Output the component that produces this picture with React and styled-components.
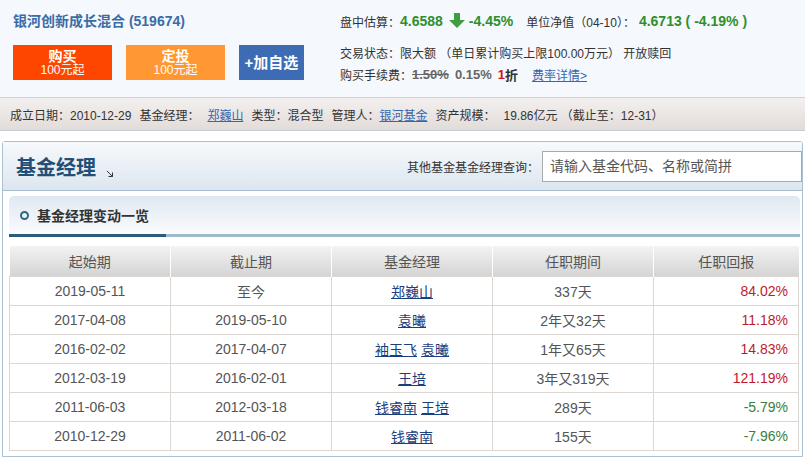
import React from 'react';
import styled, { createGlobalStyle } from 'styled-components';

const GlobalStyle = createGlobalStyle`
  html, body {
    margin: 0;
    padding: 0;
    background: #fff;
  }
  body {
    font-family: "Liberation Sans", "Noto Sans CJK SC", sans-serif;
    font-size: 12px;
    color: #333;
  }
`;

const Page = styled.div`
  width: 805px;
  height: 463px;
  overflow: hidden;
`;

const Top = styled.div`
  display: grid;
  grid-template-columns: 327px 1fr;
  height: 98px;
  box-sizing: border-box;
  padding: 11px 0 0 13px;
  background: #f5f8fc;
  border-bottom: 1px solid #c6d3df;
`;

const FundTitle = styled.div`
  height: 20px;
  line-height: 20px;
  font-size: 14px;
  font-weight: bold;
  color: #3b6ca6;
`;

const BtnRow = styled.div`
  display: flex;
  gap: 14px;
  margin-top: 14px;
`;

const Btn = styled.div`
  width: ${p => p.w || 99}px;
  height: 35px;
  background: ${p => p.bg};
  color: #fff;
  display: flex;
  flex-direction: column;
  align-items: center;
  justify-content: center;
  font-weight: bold;
  font-size: ${p => (p.big ? 15 : 14)}px;
  line-height: 15px;
  small {
    font-size: 12px;
    font-weight: normal;
    line-height: 13px;
  }
`;

const InfoLine = styled.div`
  display: flex;
  align-items: center;
  height: ${p => p.h || 22}px;
  margin-top: ${p => p.mt || 0}px;
  white-space: nowrap;
`;

const Green = styled.span`
  color: #2f8f2f;
  font-weight: bold;
  font-size: 14px;
`;

const Gray = styled.span`
  color: #666;
  font-weight: bold;
  font-size: 13px;
  margin-right: 6px;
  text-decoration: ${p => (p.strike ? 'line-through' : 'none')};
`;

const Red = styled.span`
  color: #d0141e;
  font-weight: bold;
  font-size: 13px;
`;

const TopLink = styled.a`
  color: #3566b0;
  text-decoration: underline;
  margin-left: ${p => p.ml || 0}px;
  margin-right: ${p => p.mr || 0}px;
`;

const InfoBar = styled.div`
  height: 32px;
  display: flex;
  align-items: center;
  padding-left: 10px;
  background: linear-gradient(#f3f0ef, #e2dcd9);
  border-bottom: 1px solid #c3ccd6;
  white-space: nowrap;
  span { margin-right: 8px; }
`;

const Panel = styled.div`
  margin: 10px 2px 0 2px;
  border: 1px solid #a9bfd2;
  border-radius: 3px 3px 0 0;
  height: 316px;
  box-sizing: border-box;
`;

const PanelHead = styled.div`
  height: 48px;
  display: flex;
  align-items: center;
  justify-content: space-between;
  background: linear-gradient(#f7f9fb, #dce6f0);
  border-bottom: 1px solid #a9bfd2;
`;

const HeadTitle = styled.div`
  display: flex;
  align-items: flex-end;
  padding-left: 13px;
  font-size: 20px;
  font-weight: bold;
  color: #214f78;
  svg { margin: 0 0 3px 10px; }
`;

const Search = styled.div`
  display: flex;
  align-items: center;
  gap: 3px;
`;

const SearchInput = styled.div`
  width: 251px;
  height: 29px;
  line-height: 29px;
  padding-left: 7px;
  border: 1px solid #aaa;
  background: #fff;
  font-size: 14px;
  color: #555;
`;

const Body = styled.div`
  padding: 5px 2px 0 6px;
`;

const SubTab = styled.div`
  height: 38px;
  display: flex;
  align-items: center;
  gap: 8px;
  padding-left: 11px;
  border-radius: 5px 5px 0 0;
  background: linear-gradient(#dfe8f1, #fafbfd);
  border-bottom: 3px solid #9fbacb;
  position: relative;
  font-size: 14px;
  font-weight: bold;
  color: #333;
  &::after {
    content: '';
    position: absolute;
    left: 0;
    bottom: -3px;
    width: 157px;
    height: 3px;
    background: #2b5d78;
  }
`;

const Ring = styled.span`
  width: 5px;
  height: 5px;
  border: 2px solid #2d6880;
  border-radius: 50%;
`;

const Table = styled.table`
  margin-top: 9px;
  width: 789px;
  table-layout: fixed;
  border-collapse: collapse;
  font-size: 14px;
  color: #555;
`;

const Col = styled.col`
  width: ${p => p.w}px;
`;

const Tr = styled.tr`
  height: ${p => p.h}px;
`;

const Th = styled.th`
  padding: 0;
  font-weight: normal;
  color: #555;
  background: linear-gradient(#f3f3f3, #d4d4d4);
  border-left: 1px solid #fff;
  &:first-child { border-left: none; }
`;

const Td = styled.td`
  padding: 0 ${p => (p.right ? 10 : 0)}px 0 0;
  text-align: ${p => (p.right ? 'right' : 'center')};
  border: 1px solid #dcd7d3;
  color: ${p => p.color || '#555'};
`;

const Mgr = styled.a`
  color: #1b3e7d;
  text-decoration: underline;
  & + & { margin-left: 4px; }
`;

const DownArrow = () => (
  <svg width="16" height="16" viewBox="0 0 16 16" style={{ margin: '0 4px 0 6px' }}>
    <polygon points="5,0 11,0 11,7 16,7 8,15 0,7 5,7" fill="#3f9e3f" />
  </svg>
);

const Corner = () => (
  <svg width="8" height="8" viewBox="0 0 8 8">
    <path d="M1 1 L6.5 6.5 M6.5 2.5 L6.5 6.5 L2.5 6.5" stroke="#333" strokeWidth="1" fill="none" />
  </svg>
);

const rows = [
  ['2019-05-11', '至今', ['郑巍山'], '337天', '84.02%'],
  ['2017-04-08', '2019-05-10', ['袁曦'], '2年又32天', '11.18%'],
  ['2016-02-02', '2017-04-07', ['袖玉飞', '袁曦'], '1年又65天', '14.83%'],
  ['2012-03-19', '2016-02-01', ['王培'], '3年又319天', '121.19%'],
  ['2011-06-03', '2012-03-18', ['钱睿南', '王培'], '289天', '-5.79%'],
  ['2010-12-29', '2011-06-02', ['钱睿南'], '155天', '-7.96%'],
];

const App = () => (
  <Page>
    <GlobalStyle />
    <Top>
      <div>
        <FundTitle>银河创新成长混合 (519674)</FundTitle>
        <BtnRow>
          <Btn bg="#ff4600">购买<small>100元起</small></Btn>
          <Btn bg="#ff9833">定投<small>100元起</small></Btn>
          <Btn bg="#3d6cb5" w={65} big>+加自选</Btn>
        </BtnRow>
      </div>
      <div>
        <InfoLine h={20}>
          盘中估算：<Green>4.6588</Green><DownArrow /><Green>-4.45%</Green>
          <span style={{ marginLeft: 13 }}>单位净值（04-10）：</span>
          <Green style={{ marginLeft: 4 }}>4.6713 ( -4.19% )</Green>
        </InfoLine>
        <InfoLine mt={10}>交易状态：限大额 （单日累计购买上限100.00万元） 开放赎回</InfoLine>
        <InfoLine>
          购买手续费：<Gray strike>1.50%</Gray><Gray>0.15%</Gray>
          <Red>1</Red><Gray as="b" style={{ color: '#333' }}>折</Gray>
          <TopLink ml={8}>费率详情&gt;</TopLink>
        </InfoLine>
      </div>
    </Top>
    <InfoBar>
      <span>成立日期：2010-12-29</span>
      <span>基金经理：</span>
      <TopLink mr={8}>郑巍山</TopLink>
      <span>类型：混合型</span>
      <span style={{ marginRight: 0 }}>管理人：</span>
      <TopLink mr={8}>银河基金</TopLink>
      <span>资产规模：</span>
      <span>19.86亿元 （截止至：12-31）</span>
    </InfoBar>
    <Panel>
      <PanelHead>
        <HeadTitle>基金经理<Corner /></HeadTitle>
        <Search>
          其他基金基金经理查询：
          <SearchInput>请输入基金代码、名称或简拼</SearchInput>
        </Search>
      </PanelHead>
      <Body>
        <SubTab><Ring />基金经理变动一览</SubTab>
        <Table>
          <colgroup>
            <Col w={161} />
            <Col w={161} />
            <Col w={161} />
            <Col w={161} />
            <Col w={145} />
          </colgroup>
          <thead>
            <Tr h={30}>
              <Th>起始期</Th>
              <Th>截止期</Th>
              <Th>基金经理</Th>
              <Th>任职期间</Th>
              <Th>任职回报</Th>
            </Tr>
          </thead>
          <tbody>
            {rows.map(r => (
              <Tr h={29} key={r[0]}>
                <Td>{r[0]}</Td>
                <Td>{r[1]}</Td>
                <Td>{r[2].map(n => <Mgr key={n}>{n}</Mgr>)}</Td>
                <Td>{r[3]}</Td>
                <Td right color={r[4].startsWith('-') ? '#3a7d3a' : '#c11a2c'}>{r[4]}</Td>
              </Tr>
            ))}
          </tbody>
        </Table>
      </Body>
    </Panel>
  </Page>
);

export default App;
